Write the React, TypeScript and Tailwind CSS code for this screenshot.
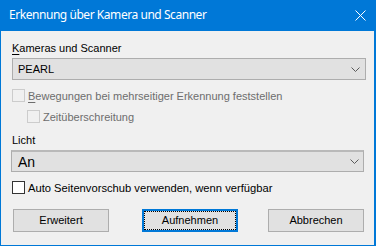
import React from "react";

const Chevron = () => (
  <svg width="9" height="5" viewBox="0 0 9 5" className="block">
    <polyline points="0.5,0.5 4.5,4.5 8.5,0.5" fill="none" stroke="#5a5a5a" strokeWidth="1" />
  </svg>
);

const CheckBox = ({ disabled }: { disabled?: boolean }) => (
  <div
    className={
      disabled
        ? "w-[13px] h-[13px] shrink-0 border border-[#cccccc] bg-[#f0f0f0]"
        : "w-[13px] h-[13px] shrink-0 border border-[#333333] bg-white"
    }
  />
);

export default function App() {
  return (
    <div
      className="w-[376px] h-[246px] bg-[#0078d7] flex flex-col overflow-hidden"
      style={{ fontFamily: '"Liberation Sans", Arial, sans-serif' }}
    >
      <div className="h-[31px] shrink-0 flex items-center justify-between pl-[9px] pr-[10px]">
        <span
          className="text-white text-[12px] leading-[16px] pb-[1px] tracking-[-0.45px]"
          style={{ fontFamily: '"Noto Sans", sans-serif' }}
        >
          Erkennung über Kamera und Scanner
        </span>
        <svg width="11" height="11" viewBox="0 0 11 11" className="block">
          <path d="M0.5,0.5 L10.5,10.5 M10.5,0.5 L0.5,10.5" stroke="#ffffff" strokeWidth="1" fill="none" />
        </svg>
      </div>
      <div className="flex-1 ml-[1px] mr-[2px] mb-[1px] bg-[#f0f0f0] pl-[11px] flex flex-col text-[11px] text-black">
        <div className="mt-[11px] h-[13px] leading-[13px]">
          <span className="underline underline-offset-[2px]">K</span>ameras und Scanner
        </div>
        <div className="mt-[3px] h-[22px] w-[354px] border border-[#adadad] bg-[#e1e1e1] flex items-center justify-between pl-[5px] pr-[5px]">
          <span className="leading-[13px]">PEARL</span>
          <Chevron />
        </div>
        <div className="mt-[9px] h-[13px] flex items-center gap-[3px]">
          <CheckBox disabled />
          <span className="leading-[13px] text-[#6d6d6d] pt-[1px]">
            <span className="underline underline-offset-[2px]">B</span>ewegungen bei mehrseitiger Erkennung feststellen
          </span>
        </div>
        <div className="mt-[8px] h-[13px] flex items-center gap-[3px] ml-[15px]">
          <CheckBox disabled />
          <span className="leading-[13px] text-[#6d6d6d] pt-[1px]">Zeitüberschreitung</span>
        </div>
        <div className="mt-[11px] h-[13px] leading-[13px]">Licht</div>
        <div className="mt-[3px] ml-[-1px] h-[22px] w-[353px] border border-[#adadad] border-t-[2px] border-t-[#b9b9b9] bg-[#e1e1e1] flex items-center justify-between pl-[6px] pr-[4px]">
          <span className="text-[14px] leading-[16px]">An</span>
          <Chevron />
        </div>
        <div className="mt-[9px] h-[13px] flex items-center gap-[3px]">
          <CheckBox />
          <span className="text-[11.2px] leading-[13px] pt-[1px]">Auto Seitenvorschub verwenden, wenn verfügbar</span>
        </div>
        <div className="mt-[15px] h-[23px] flex text-[11px]">
          <div className="ml-[1px] w-[96px] h-[23px] border border-[#adadad] bg-[#e1e1e1] flex items-center justify-center">
            Erweitert
          </div>
          <div className="ml-[33px] w-[96px] h-[23px] border-2 border-[#0078d7] bg-[#e1e1e1] flex">
            <div className="flex-1 border border-dotted border-black flex items-center justify-center">
              Aufnehmen
            </div>
          </div>
          <div className="ml-[30px] w-[96px] h-[23px] border border-[#adadad] bg-[#e1e1e1] flex items-center justify-center">
            Abbrechen
          </div>
        </div>
      </div>
    </div>
  );
}
